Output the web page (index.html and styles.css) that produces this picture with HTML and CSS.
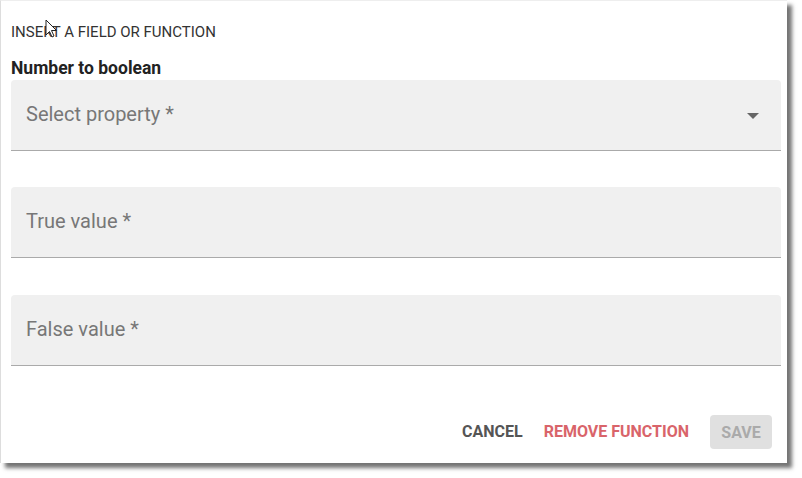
FILE: index.html
```html
<!DOCTYPE html>
<html lang="en">
<head>
  <meta charset="UTF-8">
  <title>Insert a field or function</title>
  <link rel="stylesheet" href="styles.css">
</head>
<body>
  <div class="dialog">
    <div class="dialog-title">INSERT A FIELD OR FUNCTION</div>
    <div class="function-name">Number to boolean</div>

    <div class="field field-select">
      <span class="placeholder">Select property *</span>
      <svg class="arrow" width="12" height="6" viewBox="0 0 12 6"><path d="M0 0 L12 0 L6 6 Z" fill="#666"/></svg>
    </div>

    <div class="field">
      <span class="placeholder">True value *</span>
    </div>

    <div class="field field-last">
      <span class="placeholder">False value *</span>
    </div>

    <div class="actions">
      <button class="btn btn-cancel">Cancel</button>
      <button class="btn btn-remove">Remove function</button>
      <button class="btn btn-save" disabled>Save</button>
    </div>

    <!-- mouse pointer caught in the screenshot -->
    <svg class="cursor" width="14" height="20" viewBox="0 0 14 20">
      <path d="M1 1 L1 16 L4.5 12.5 L7 18 L9 17 L6.5 11.5 L11.5 11.5 Z" fill="#fff" stroke="#222" stroke-width="1"/>
    </svg>
  </div>
</body>
</html>
```

FILE: styles.css
```css
body {
  margin: 0;
  padding: 0 0 15px 0;
  background: #fff;
  font-family: Roboto, "Liberation Sans", Arial, sans-serif;
}

.dialog {
  position: relative;
  width: 787px;
  height: 463px;
  box-sizing: border-box;
  padding: 22px 6px 0 11px;
  background: #fff;
  border-top: 1px solid #eee;
  border-left: 1px solid #ddd;
  box-shadow: 5px 5px 4px rgba(0, 0, 0, 0.55);
  display: flex;
  flex-direction: column;
}

.dialog-title {
  font-size: 15px;
  color: #333;
  line-height: 18px;
  margin-left: -1px;
}

.function-name {
  margin-top: 17px;
  font-size: 17.5px;
  font-weight: bold;
  color: #222;
  line-height: 20px;
  margin-left: -1px;
}

.field {
  height: 70px;
  margin-top: 2px;
  background: #f0f0f0;
  border-bottom: 1px solid #aaa;
  border-radius: 4px 4px 0 0;
  display: flex;
  align-items: center;
  justify-content: space-between;
  padding: 0 22px 0 15px;
  margin-left: -1px;
}

.field + .field {
  margin-top: 36px;
}

.field-last {
  margin-top: 37px !important;
}

.placeholder {
  font-size: 20px;
  color: #777;
  margin-top: -3px;
}

.arrow {
  margin-top: 1px;
}

.actions {
  margin-top: auto;
  margin-bottom: 14px;
  margin-right: 9px;
  display: flex;
  justify-content: flex-end;
  align-items: center;
  gap: 1px;
}

.btn {
  font-family: Roboto, "Liberation Sans", Arial, sans-serif;
  font-size: 16px;
  font-weight: bold;
  text-transform: uppercase;
  border: none;
  background: none;
  padding: 8px 10px;
  border-radius: 4px;
  cursor: pointer;
}

.btn-cancel {
  color: #555;
}

.btn-remove {
  color: #d9646a;
  margin-right: 10px;
}

.btn-save {
  background: #e0e0e0;
  color: #aaa;
  width: 62px;
  height: 34px;
  cursor: default;
}

.cursor {
  position: absolute;
  left: 44px;
  top: 18px;
}
```
